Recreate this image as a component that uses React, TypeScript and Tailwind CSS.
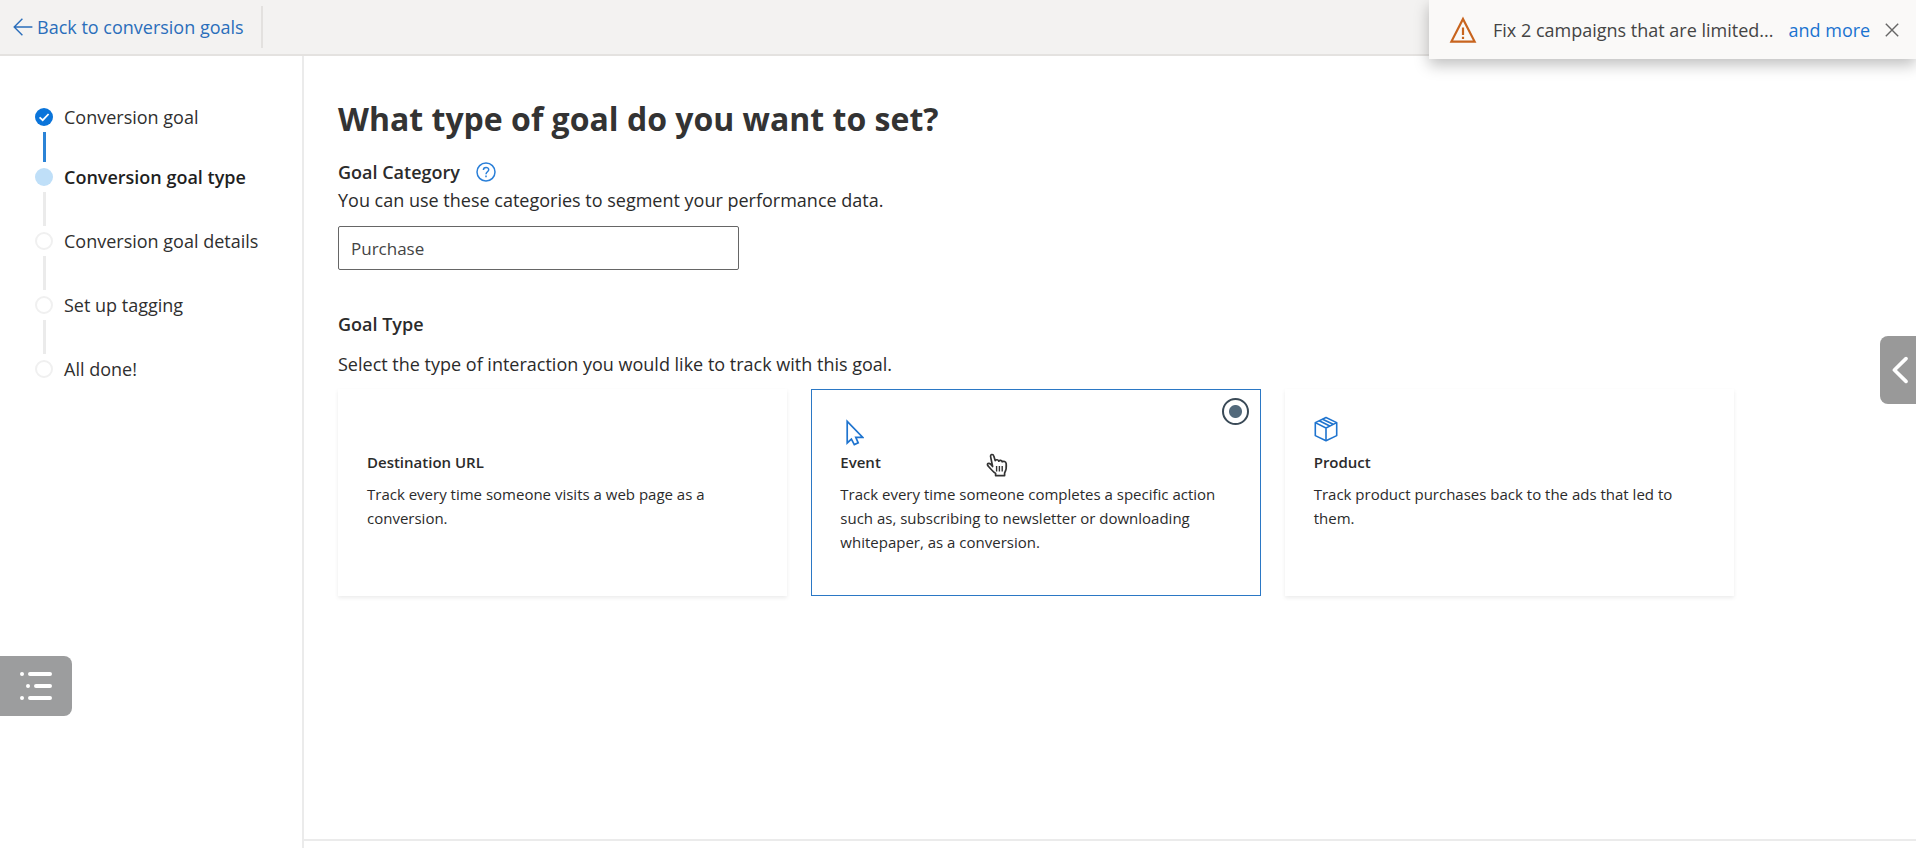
import { useState, type ReactNode } from "react";

type StepState = "done" | "current" | "todo";

const steps: { label: string; state: StepState }[] = [
  { label: "Conversion goal", state: "done" },
  { label: "Conversion goal type", state: "current" },
  { label: "Conversion goal details", state: "todo" },
  { label: "Set up tagging", state: "todo" },
  { label: "All done!", state: "todo" },
];

const markerClass: Record<StepState, string> = {
  done: "bg-[#0a74da]",
  current: "bg-[#bfdff8]",
  todo: "border-2 border-[#f0f0f0] bg-white",
};

function Step({ label, state, last }: { label: string; state: StepState; last: boolean }) {
  return (
    <li className="flex gap-[11px]" aria-current={state === "current" ? "step" : undefined}>
      <div className="flex w-[18px] flex-col items-center">
        <span className={`flex size-[18px] shrink-0 items-center justify-center rounded-full ${markerClass[state]}`}>
          {state === "done" && (
            <svg viewBox="0 0 18 18" className="size-[18px]" fill="none" stroke="white" strokeWidth="1.8" aria-hidden="true">
              <path d="M4.6 9.3 7.7 12.2 13.6 6" />
            </svg>
          )}
        </span>
        {!last && (
          <span className={`my-[6px] w-[3px] ${state === "done" ? "h-[30px] bg-[#2b83d6]" : "h-[34px] bg-[#ebebeb]"}`} />
        )}
      </div>
      <span className={`h-[18px] text-[18px] leading-[18px] whitespace-nowrap ${state === "current" ? "font-semibold text-[#1f1f1f]" : "text-[#2f2f2f]"}`}>
        {label}
      </span>
    </li>
  );
}

function EventIcon() {
  return (
    <svg viewBox="0 0 24 28" className="mt-2 h-7 w-6" fill="none" stroke="#1f74cf" strokeWidth="1.7" aria-hidden="true">
      <path d="M7.2 2.4V24L11.4 20.2L14.3 25.6L18.2 23.8L15.8 18.4H22.8Z" />
    </svg>
  );
}

function ProductIcon() {
  return (
    <svg viewBox="0 0 24 26" className="h-[26px] w-6" fill="none" stroke="#1f74cf" strokeWidth="1.6" strokeLinejoin="round" aria-hidden="true">
      <path d="M12 1.5 22.7 6.6V19.6L12 24.7 1.3 19.6V6.6Z" />
      <path d="M1.3 6.6 12 12 22.7 6.6M12 12V24.7M5.2 4.8 15.8 10M8.6 3.2 19.2 8.3" />
    </svg>
  );
}

const goalTypes: { id: string; title: string; text: string; icon: ReactNode }[] = [
  { id: "url", title: "Destination URL", text: "Track every time someone visits a web page as a conversion.", icon: null },
  {
    id: "event",
    title: "Event",
    text: "Track every time someone completes a specific action such as, subscribing to newsletter or downloading whitepaper, as a conversion.",
    icon: <EventIcon />,
  },
  { id: "product", title: "Product", text: "Track product purchases back to the ads that led to them.", icon: <ProductIcon /> },
];

function HandPointer() {
  return (
    <svg viewBox="0 0 22 24" className="pointer-events-none absolute top-[63px] left-[174px] h-6 w-[22px]" fill="white" stroke="#333" strokeWidth="1.7" strokeLinejoin="round" aria-hidden="true">
      <path d="M6.6 13.5 4.6 3.6C4.2 1 7.2.8 7.8 3L9.2 7.6C10 6.2 12.4 6.6 12.8 8.2 13.8 6.8 15.8 7.2 16.2 8.8 17.6 7.8 19.8 8.4 20.2 10.6 20.6 14.4 20.2 17.4 18.6 20V22.6H9.6V20.4C6.8 18.4 4.6 15.8 1.8 12.6 0.6 10.8 2.8 9.6 4.4 11Z" />
      <path d="M10.6 13V18.4M13.4 13V18.4M16.2 13V18.4" strokeWidth="1.4" />
    </svg>
  );
}

export default function App() {
  const [goalType, setGoalType] = useState("event");
  const [category, setCategory] = useState("Purchase");

  return (
    <div className="relative flex min-h-screen flex-col bg-white font-['Open_Sans','Noto_Sans',sans-serif] text-[18px] text-[#2b2b2b]">
      <header className="flex h-14 items-center border-b-2 border-[#e4e2e0] bg-[#f3f2f1]">
        <a href="#goals" className="flex items-center gap-1 pl-[13px] text-[#2a6ebb]">
          <svg viewBox="0 0 20 18" className="h-[18px] w-5" fill="none" stroke="currentColor" strokeWidth="1.4" aria-hidden="true">
            <path d="M9.4.8 1.2 9 9.4 17.2M1.2 9H19.4" />
          </svg>
          Back to conversion goals
        </a>
        <span className="ml-[17px] h-[42px] w-0.5 bg-[#e3e1df]" />
      </header>

      <div className="flex flex-1">
        <nav aria-label="Progress" className="w-[304px] shrink-0 border-r-2 border-[#ebebeb] pt-[52px] pl-[35px]">
          <ol>
            {steps.map((s, i) => (
              <Step key={s.label} label={s.label} state={s.state} last={i === steps.length - 1} />
            ))}
          </ol>
        </nav>

        <div className="flex min-w-0 flex-1 flex-col">
          <main className="max-w-[1430px] flex-1 pt-10 pl-[34px]">
            <h1 className="text-[32px] leading-[46px] font-bold text-[#333]">What type of goal do you want to set?</h1>
            <div className="mt-[18px] flex h-6 items-center gap-4">
              <label htmlFor="category" className="font-semibold">Goal Category</label>
              <button type="button" aria-label="About goal categories" className="text-[#2a7fd8]">
                <svg viewBox="0 0 20 20" className="size-5" fill="none" stroke="currentColor" strokeWidth="1.5" aria-hidden="true">
                  <circle cx="10" cy="10" r="9" />
                  <path d="M7.4 8C7.4 4.6 12.7 4.7 12.7 7.7 12.7 9.8 10 9.8 10 12.2M10 13.6V15.2" />
                </svg>
              </button>
            </div>
            <p className="mt-1 leading-6">You can use these categories to segment your performance data.</p>
            <input
              id="category"
              type="text"
              value={category}
              onChange={(e) => setCategory(e.target.value)}
              className="mt-[14px] block h-11 w-[401px] rounded-xs border border-[#666] bg-white px-3 text-[17px] text-[#444]"
            />
            <fieldset>
              <legend className="pt-[42px] leading-6 font-semibold">Goal Type</legend>
              <p className="mt-4 leading-6">Select the type of interaction you would like to track with this goal.</p>
              <div className="mt-[13px] grid grid-cols-3 gap-6">
                {goalTypes.map((g) => {
                  const selected = g.id === goalType;
                  return (
                    <label
                      key={g.id}
                      className={`relative block h-[207px] border bg-white px-7 pt-[25px] text-[15px] ${
                        selected ? "border-[#2b78c5]" : "border-transparent shadow-[0_2px_4px_rgba(0,0,0,0.08)]"
                      }`}
                    >
                      <input
                        type="radio"
                        name="goal-type"
                        checked={selected}
                        onChange={() => setGoalType(g.id)}
                        className={`absolute top-2 right-[11px] size-[27px] appearance-none rounded-full border-2 border-[#3a4a57] bg-[radial-gradient(circle,#52697b_6px,white_7px)] ${
                          selected ? "" : "opacity-0"
                        }`}
                      />
                      <span className="flex h-7 items-center">{g.icon}</span>
                      <span className="mt-[7px] block leading-6 font-semibold">{g.title}</span>
                      <span className="mt-2 block leading-6">{g.text}</span>
                      {g.id === "event" && <HandPointer />}
                    </label>
                  );
                })}
              </div>
            </fieldset>
          </main>
          <footer className="h-[9px] border-t-2 border-[#ebebeb]" />
        </div>
      </div>

      <div role="status" className="absolute top-0 right-0 flex h-[59px] w-[487px] items-center bg-[#faf9f8] pt-px pl-5 shadow-[0_6px_14px_rgba(0,0,0,0.25)]">
        <svg viewBox="0 0 28 28" className="size-7" fill="none" stroke="#c8641e" strokeWidth="2.2" aria-hidden="true">
          <path d="M14 3 25.6 25.6H2.4Z" />
          <path d="M14 11.5V19M14 20.8V23" />
        </svg>
        <span className="ml-4 whitespace-nowrap text-[#444]">Fix 2 campaigns that are limited...</span>
        <a href="#more" className="ml-[15px] whitespace-nowrap text-[#1a73d0]">and more</a>
        <button type="button" aria-label="Dismiss" className="ml-[15px] text-[#666]">
          <svg viewBox="0 0 14 14" className="size-[14px]" fill="none" stroke="currentColor" strokeWidth="1.4" aria-hidden="true">
            <path d="M.8.8 13.2 13.2M13.2.8.8 13.2" />
          </svg>
        </button>
      </div>

      <button type="button" aria-label="Open side panel" className="absolute top-[336px] right-0 flex h-[68px] w-9 items-center justify-end rounded-l-lg bg-[#999] pr-2">
        <svg viewBox="0 0 16 28" className="h-7 w-4" fill="none" stroke="white" strokeWidth="3.6" strokeLinecap="round" strokeLinejoin="round" aria-hidden="true">
          <path d="M14 2.6 2.4 14 14 25.4" />
        </svg>
      </button>

      <button type="button" aria-label="Open contents" className="absolute top-[656px] left-0 flex h-[60px] w-[72px] items-center rounded-r-lg bg-[#9c9d9e] pl-5">
        <svg viewBox="0 0 32 28" className="h-7 w-8" stroke="white" strokeWidth="4" strokeLinecap="round" aria-hidden="true">
          <path d="M2 2H2.01M10 2H30M8 14H8.01M16 14H30M2 26H2.01M10 26H30" />
        </svg>
      </button>
    </div>
  );
}
